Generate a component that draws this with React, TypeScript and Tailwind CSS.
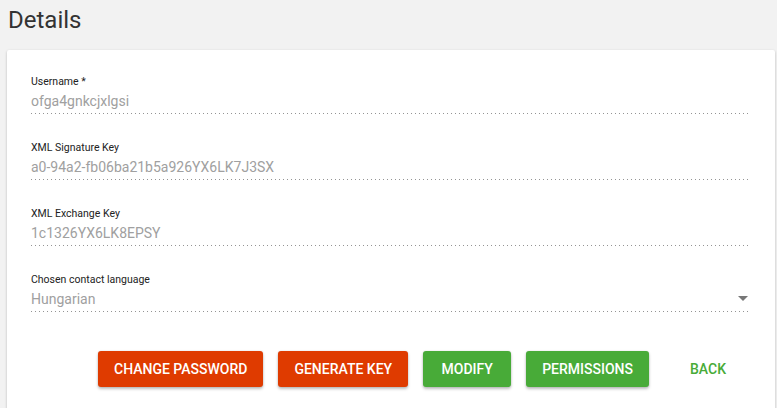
import React from "react";

const fields = [
  { label: "Username *", value: "ofga4gnkcjxlgsi" },
  { label: "XML Signature Key", value: "a0-94a2-fb06ba21b5a926YX6LK7J3SX" },
  { label: "XML Exchange Key", value: "1c1326YX6LK8EPSY" },
];

function Dotted() {
  return (
    <div className="h-px w-full bg-[linear-gradient(to_right,rgba(0,0,0,0.42)_0%,rgba(0,0,0,0.42)_25%,transparent_25%)] bg-[length:4px_1px] bg-repeat-x" />
  );
}

function Field({ label, value, select }: { label: string; value: string; select?: boolean }) {
  return (
    <div className="mb-[29px]">
      <div className="text-[10.5px] leading-[10px] text-[#222]">{label}</div>
      <div className="mt-[5px] flex items-center justify-between pb-[3px]">
        <div className="text-[14px] leading-[18px] text-[#a0a0a0]">{value}</div>
        {select && (
          <div className="mr-[3px] mt-[-2px] h-0 w-0 border-x-[5px] border-t-[5px] border-x-transparent border-t-[#777]" />
        )}
      </div>
      <Dotted />
    </div>
  );
}

export default function App() {
  return (
    <div className="h-[408px] overflow-hidden bg-[#f2f2f2] font-['Roboto',sans-serif]">
      <div className="h-[50px] pl-[8px] pt-[6px]">
        <h1 className="text-[24px] leading-[28px] text-[#333] font-normal">Details</h1>
      </div>
      <div className="ml-[7px] w-[768px] rounded-t-[2px] bg-white px-[24px] pt-[27px] pb-[60px] shadow-[0_1px_3px_rgba(0,0,0,0.2),0_1px_1px_rgba(0,0,0,0.12)]">
        {fields.map((f) => (
          <Field key={f.label} label={f.label} value={f.value} />
        ))}
        <Field label="Chosen contact language" value="Hungarian" select />
        <div className="mt-[39px] mr-[-1px] flex justify-end gap-[15px]">
          <button className="h-[36px] min-w-[88px] rounded-[3px] bg-[#df3b00] px-[16px] text-[14px] font-medium uppercase text-white shadow-[0_2px_3px_rgba(0,0,0,0.25),0_0_2px_rgba(0,0,0,0.12)]">
            Change Password
          </button>
          <button className="h-[36px] min-w-[88px] rounded-[3px] bg-[#df3b00] px-[16px] text-[14px] font-medium uppercase text-white shadow-[0_2px_3px_rgba(0,0,0,0.25),0_0_2px_rgba(0,0,0,0.12)]">
            Generate Key
          </button>
          <button className="h-[36px] min-w-[88px] rounded-[3px] bg-[#48ab38] px-[16px] text-[14px] font-medium uppercase text-white shadow-[0_2px_3px_rgba(0,0,0,0.25),0_0_2px_rgba(0,0,0,0.12)]">
            Modify
          </button>
          <button className="h-[36px] min-w-[88px] rounded-[3px] bg-[#48ab38] px-[16px] text-[14px] font-medium uppercase text-white shadow-[0_2px_3px_rgba(0,0,0,0.25),0_0_2px_rgba(0,0,0,0.12)]">
            Permissions
          </button>
          <button className="h-[36px] min-w-[88px] rounded-[3px] px-[16px] text-[14px] font-medium uppercase text-[#48ab38]">
            Back
          </button>
        </div>
      </div>
    </div>
  );
}
